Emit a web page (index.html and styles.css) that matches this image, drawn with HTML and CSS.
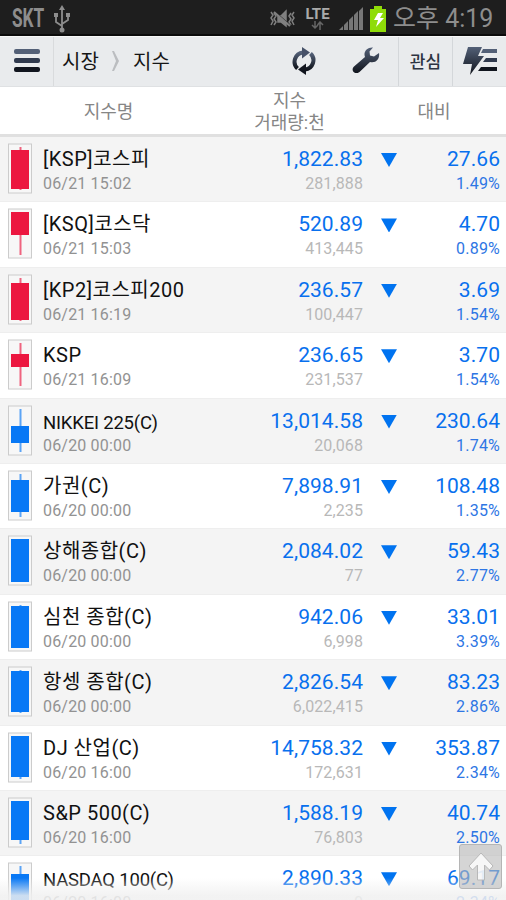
FILE: index.html
```html
<!DOCTYPE html>
<html lang="ko">
<head>
<meta charset="utf-8">
<title>지수</title>
<link rel="stylesheet" href="styles.css">
</head>
<body>
<div class="phone">
<div class="status">
  <span class="carrier">SKT</span>
  <svg class="usb" width="18" height="28" viewBox="0 0 18 28" fill="none" stroke="#8d8d8d" stroke-width="1.800"><path d="M9 25V4M9 21L3 17V10M9 19L15 15V10"/><path d="M9 0l3 5H6zM1 8h4v4H1zM13 8h4v4h-4z" fill="#8d8d8d" stroke="none"/><circle cx="9" cy="25" r="2.500" fill="#8d8d8d" stroke="none"/></svg>
  <svg class="mute" width="27" height="20" viewBox="0 0 27 20" fill="none" stroke="#808080" stroke-width="1.500"><path d="M2 3l2 3-2 3 2 3-2 4M5 4l2 3-2 3 2 3-2 3M25 3l-2 3 2 3-2 3 2 4M22 4l-2 3 2 3-2 3 2 3"/><path d="M9 7h3l5-5v15l-5-4H9z" fill="#808080"/><path d="M6 3l16 14" stroke="#1e1e1e" stroke-width="1.500"/><path d="M5 3l16 14" stroke-width="2"/></svg>
  <span class="lte"><b>LTE</b><svg width="13" height="9" viewBox="0 0 13 9" fill="none" stroke="#666" stroke-width="1.500"><path d="M4 0v7M1 4l3 3 3-3M9 9V2M6.500 4L9 1l3 3"/></svg></span>
  <svg class="signal" width="25" height="24" viewBox="0 0 25 24" fill="#777"><path d="M0 23l4-4v4zM5 18l4-4v9H5zM10 13l4-4v14h-4zM15 8l4-4v19h-4zM20 4l4-4v23h-4z"/></svg>
  <svg class="battery" width="18" height="26" viewBox="0 0 18 26"><path d="M5 0h8v3h4v23H1V3h4z" fill="#8fdc08"/><path d="M9 7h5l-3 5h4l-8 9 2-7H5z" fill="#fff"/></svg>
  <span class="clock">오후 4:19</span>
</div>
<div class="toolbar">
  <svg width="0" height="0" class="defs"><defs><linearGradient id="ink" x1="0" y1="0" x2="0" y2="1"><stop offset="0" stop-color="#536077"/><stop offset="1" stop-color="#10141c"/></linearGradient></defs></svg>
  <div class="menu"><i></i><i></i><i></i></div>
  <div class="crumbs"><span>시장</span><svg width="8" height="20" viewBox="0 0 8 20"><path d="M0 0h2l5 10-5 10H0l4-10z" fill="#bbbdc0"/></svg><span>지수</span></div>
  <svg class="refresh" width="26" height="28" viewBox="0 0 26 28"><g fill="none" stroke="url(#ink)" stroke-width="4"><path d="M6.500 21.500A9.300 9.300 0 0 1 12 5.500"/><path d="M19.500 6.500A9.300 9.300 0 0 1 14 22.500"/></g><path d="M11 0l8 5.500-8 6z" fill="#465168"/><path d="M15 16.500v11.500l-8-5.500z" fill="#11151e"/></svg>
  <svg class="wrench" width="28" height="26" viewBox="0 0 28 26"><path d="M21 .5C15 0 11 5 13 10L2 19.500c-4 4 1.500 9 5.500 5.500L18 15c6 1.500 10-3 9-9l-5 3.500-4-1-.5-4z" fill="url(#ink)"/></svg>
  <div class="favorite">관심</div>
  <div class="quick"><svg width="35" height="29" viewBox="0 0 35 29"><path d="M5 0h14l-4 9h6L7 28l2-11H0z" fill="url(#ink)"/><path d="M20 2h14v4H18z" fill="#536077"/><path d="M23 11h11v4H20z" fill="#303a4e"/><path d="M18 20h16v4H15z" fill="#11151e"/></svg></div>
</div>
<div class="heading"><span class="h-name">지수명</span><span class="h-index">지수<br>거래량:천</span><span class="h-change">대비</span></div>
<div class="list" id="list"></div>
<div class="fade"></div>
<div class="top"><svg width="26" height="30" viewBox="0 0 26 30"><path d="M13 1l12 13-3.500 4-5-5v15h-7V13l-5 5L1 14z" fill="#fff" fill-opacity=".8" stroke="#b8b8b8"/></svg></div>
</div>
<script src="list.js"></script>
</body>
</html>
```
FILE: styles.css
```css
* { box-sizing: border-box; }
body { margin: 0; background: #fff; font-family: Roboto, "Noto Sans CJK KR", sans-serif; }
.phone { position: relative; width: 506px; height: 900px; overflow: hidden; display: flex; flex-direction: column; }
.status { height: 36px; flex: none; display: flex; align-items: center; background: #1e1e1e; border-bottom: 2px solid #0b0b0b; padding: 3px 0 0 12px; color: #8d8d8d; }
.carrier { width: 41px; font: bold 25px/34px Roboto, sans-serif; transform: scaleX(.69); transform-origin: 0 50%; }
.mute { margin-left: 198px; }
.lte { width: 27px; margin-left: 8px; display: flex; flex-direction: column; align-items: center; font-size: 15px; line-height: 14px; color: #aaa; }
.signal { margin-left: 8px; }
.battery { margin-left: 5px; }
.clock { margin-left: 6px; font-size: 25px; line-height: 34px; white-space: nowrap; }
.toolbar { height: 51px; flex: none; display: flex; align-items: center; background: #e9ebed; border-top: 1px solid #f8f8f8; border-bottom: 1px solid #dfe1e3; }
.defs { position: absolute; }
.menu { width: 54px; height: 100%; border-right: 1px solid #d9dbdd; display: flex; flex-direction: column; justify-content: center; gap: 4px; padding: 0 0 3px 14px; }
.menu i { width: 26px; height: 5px; border-radius: 2px; background: #536077; }
.menu i:nth-child(2) { background: #303a4e; }
.menu i:nth-child(3) { background: #11151e; }
.crumbs { width: 237px; display: flex; align-items: center; gap: 13px; padding: 0 0 2px 8px; font-size: 20px; color: #151515; }
.crumbs span { width: 37px; white-space: nowrap; }
.wrench { margin-left: 35px; margin-bottom: 3px; }
.refresh { margin-bottom: 2px; }
.favorite { margin-left: 18px; width: 55px; height: 100%; border-left: 1px solid #d4d7da; border-right: 1px solid #d4d7da; display: flex; align-items: center; justify-content: center; padding-bottom: 3px; font-size: 17px; font-weight: 500; color: #2d3441; }
.quick { padding-left: 10px; display: flex; }
.heading { height: 50px; flex: none; display: flex; align-items: center; border-bottom: 3px solid #e0e0e0; color: #868686; font-size: 18px; line-height: 22px; text-align: center; padding-top: 2px; }
.h-name { width: 217px; }
.h-index { width: 145px; }
.h-change { width: 144px; }
.list { flex: none; height: 763px; overflow: hidden; }
.row { height: 65.4px; display: flex; background: #fff; border-bottom: 1px solid #eee; padding: 6px 6px 0 7px; }
.row:nth-child(odd) { background: #f4f4f4; }
.name { margin-left: 11px; width: 170px; white-space: nowrap; }
.value { width: 150px; text-align: right; }
.change { flex: 1; text-align: right; }
.main { font-size: 20px; line-height: 30px; height: 29px; padding-top: 1px; }
.sub { font-size: 16px; line-height: 22px; color: #929292; padding-top: 1px; }
.name .main { color: #111; letter-spacing: .5px; }
.name .sub { letter-spacing: .18px; }
.name .small { font-size: 18.500px; padding-top: 3px; letter-spacing: -.2px; }
.value .main, .change .main { color: #0870ee; font-size: 21px; letter-spacing: .05px; }
.value .sub { color: #b8b8b8; letter-spacing: .1px; }
.change .sub { color: #2e76e4; font-size: 16px; letter-spacing: .2px; }
.arrow { width: 16px; height: 14px; margin: 10px 0 0 18px; background: #0073f0; clip-path: polygon(0 0, 100% 0, 50% 100%); }
.fade { position: absolute; left: 0; right: 0; bottom: 0; height: 22px; background: linear-gradient(#f0f0f000, #f0f0f0d8 80%); }
.top { position: absolute; left: 459px; top: 844px; width: 43px; height: 45px; border: 1px solid #b5b5b5; border-radius: 3px; background: #b9b9b999; display: flex; align-items: center; justify-content: center; }
```
FILE: list.js
```js
const rows = [
  ["[KSP]코스피", "06/21 15:02", "1,822.83", "281,888", "27.66", "1.49%", "r", 4, 7, 46, 47],
  ["[KSQ]코스닥", "06/21 15:03", "520.89", "413,445", "4.70", "0.89%", "r", 4, 4, 27, 47],
  ["[KP2]코스피200", "06/21 16:19", "236.57", "100,447", "3.69", "1.54%", "r", 4, 9, 46, 47],
  ["KSP", "06/21 16:09", "236.65", "231,537", "3.70", "1.54%", "r", 4, 15, 28, 47],
  ["NIKKEI 225(C)", "06/20 00:00", "13,014.58", "20,068", "230.64", "1.74%", "b", 4, 21, 38, 47],
  ["가권(C)", "06/20 00:00", "7,898.91", "2,235", "108.48", "1.35%", "b", 4, 10, 42, 47],
  ["상해종합(C)", "06/20 00:00", "2,084.02", "77", "59.43", "2.77%", "b", 4, 4, 47, 47],
  ["심천 종합(C)", "06/20 00:00", "942.06", "6,998", "33.01", "3.39%", "b", 4, 5, 47, 47],
  ["항셍 종합(C)", "06/20 00:00", "2,826.54", "6,022,415", "83.23", "2.86%", "b", 4, 5, 46, 47],
  ["DJ 산업(C)", "06/20 16:00", "14,758.32", "172,631", "353.87", "2.34%", "b", 4, 4, 45, 47],
  ["S&amp;P 500(C)", "06/20 16:00", "1,588.19", "76,803", "40.74", "2.50%", "b", 4, 4, 43, 47],
  ["NASDAQ 100(C)", "06/20 16:00", "2,890.33", "0", "69.17", "2.34%", "b", 4, 12, 45, 47]
];
document.getElementById("list").innerHTML = rows.map(([n, d, v, q, c, p, k, hi, a, b, lo]) => {
  const color = k === "r" ? "#ec1740" : "#0878f5";
  const small = /^N/.test(n) ? " small" : "";
  return `<div class="row"><svg width="25" height="51" viewBox="0 0 25 51"><rect x="1.500" y="1" width="23" height="49" fill="#f7f7f7" stroke="#ccc"/><path d="M13.500 ${hi}V${lo}" stroke="${color}" stroke-width="2" opacity=".65"/><rect x="4" y="${a}" width="18" height="${b - a}" fill="${color}"/></svg>
<div class="name"><div class="main${small}">${n}</div><div class="sub">${d}</div></div>
<div class="value"><div class="main">${v}</div><div class="sub">${q}</div></div><div class="arrow"></div>
<div class="change"><div class="main">${c}</div><div class="sub">${p}</div></div></div>`;
}).join("");
```
